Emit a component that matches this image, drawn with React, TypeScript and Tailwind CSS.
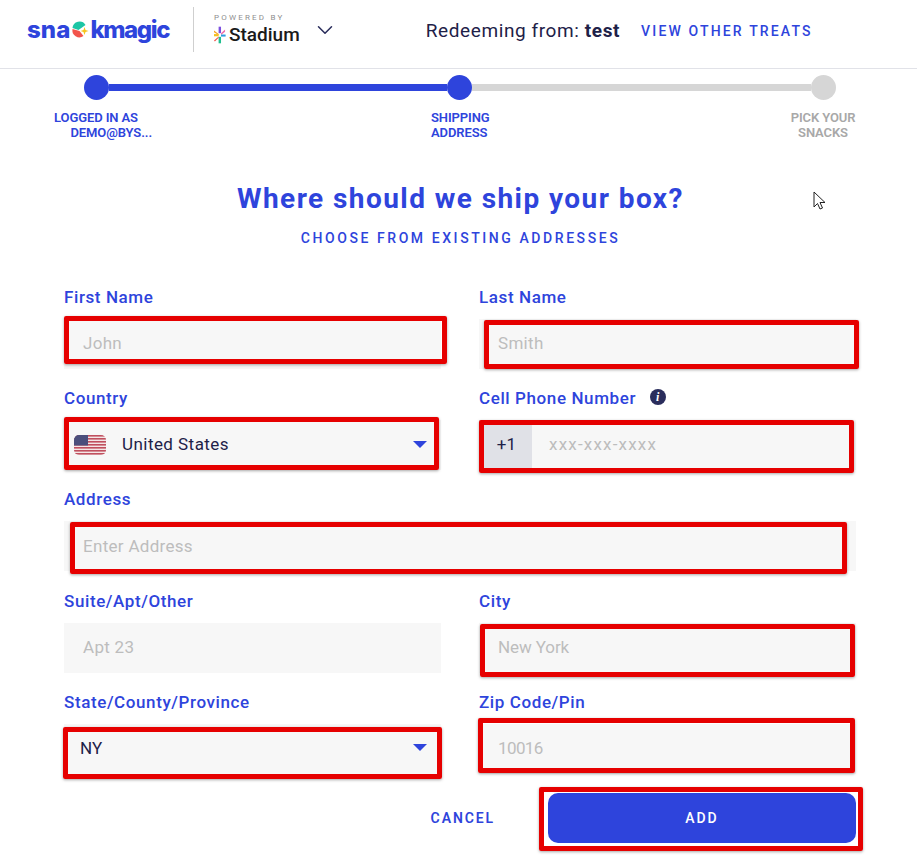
import { ChevronDown } from 'lucide-react';

const overlays = [
  'left-[64px] top-[316px] w-[383px] h-[48px]',
  'left-[484px] top-[320px] w-[375px] h-[49px]',
  'left-[64px] top-[417px] w-[375px] h-[53px]',
  'left-[479px] top-[420px] w-[375px] h-[53px]',
  'left-[70px] top-[522px] w-[777px] h-[52px]',
  'left-[480px] top-[624px] w-[375px] h-[53px]',
  'left-[63px] top-[727px] w-[379px] h-[52px]',
  'left-[478px] top-[718px] w-[377px] h-[55px]',
  'left-[539px] top-[787px] w-[324px] h-[64px]',
];

function Label({ children }: { children: React.ReactNode }) {
  return <label className="block h-[18px] leading-[18px] text-[17px] font-medium text-[#2e44dc] tracking-[0.6px] mb-[13px]">{children}</label>;
}

function Field({ label, placeholder, spacing = 'tracking-[0.3px]' }: { label: string; placeholder: string; spacing?: string }) {
  return (
    <div>
      <Label>{label}</Label>
      <div className={`h-[50px] bg-[#f7f7f7] flex items-center px-[19px] text-[17px] text-[#bdbdbd] ${spacing}`}>{placeholder}</div>
    </div>
  );
}

function Caret() {
  return <span className="ml-auto -mt-[2px] w-0 h-0 border-x-[7px] border-x-transparent border-t-[7px] border-t-[#2e44dc]" />;
}

function UsFlag() {
  return (
    <svg width="32" height="20" viewBox="0 0 32 20" className="rounded-[5px]">
      <rect width="32" height="20" fill="#f4e6e6" />
      {[0, 3, 6, 9, 12, 15, 18].map((y) => (
        <rect key={y} y={y} width="32" height="1.6" fill="#c0505f" />
      ))}
      <rect width="14" height="10.5" fill="#4b4f7c" />
    </svg>
  );
}

function Logo() {
  return (
    <div className="flex items-center text-[#2e44dc] text-[24px] font-extrabold leading-none font-['Inter',sans-serif]">
      <span className="tracking-[0.1px]">sna</span>
      <svg width="19" height="18" viewBox="0 0 18 18" className="mx-[0.5px]">
        <path d="M1 7 A7 7 0 0 1 14 4 L7 9 Z" fill="#1cc5a5" />
        <path d="M1 8 L8 10 L12 15 A7 7 0 0 1 1 8 Z" fill="#f2544b" />
        <path d="M13 6 L14 9 L17 10 L14 11 L13 14 L12 11 L9 10 L12 9 Z" fill="#f7c51e" />
      </svg>
      <span className="tracking-[-1.4px]">kmagic</span>
    </div>
  );
}

function StadiumMark() {
  return (
    <svg width="12" height="18" viewBox="0 0 13 18">
      <rect x="5" y="0" width="2.6" height="7" fill="#7b4fe0" />
      <rect x="5" y="11" width="2.6" height="7" fill="#1fbf8f" />
      <path d="M0 4 L5 8 L5 9 L0 6 Z" fill="#f7a01e" />
      <rect x="0" y="8" width="5" height="2.4" fill="#f4c01e" />
      <path d="M0 15 L5 10.5 L5 12 L1 16 Z" fill="#f2544b" />
      <path d="M7.6 7 L12 3 L12 5.5 L7.6 9 Z" fill="#f06ba8" />
      <rect x="7.6" y="8.5" width="5" height="2.2" fill="#2e9ce0" />
    </svg>
  );
}

function Step({ lines, color, align }: { lines: string[]; color: string; align: string }) {
  return (
    <div className={`text-[13px] font-semibold leading-[15px] tracking-[-0.1px] ${color} ${align}`}>
      {lines.map((l) => (
        <div key={l}>{l}</div>
      ))}
    </div>
  );
}

export default function App() {
  return (
    <div className="relative w-[917px] h-[860px] bg-white overflow-hidden font-['Roboto',sans-serif] text-[#1e2148]">
      <header className="h-[69px] border-b border-[#e1e2e8] flex items-center">
        <div className="w-[193px] pl-[27px] pb-[9px]"><Logo /></div>
        <div className="w-px h-[45px] bg-[#cfcfcf] -mt-[9px]" />
        <div className="ml-[20px] -mt-[8px]">
          <div className="text-[8px] leading-[10px] tracking-[2.2px] text-[#8f8f8f]">POWERED BY</div>
          <div className="flex items-center gap-[3px] text-[#1a1a1a] text-[19px] leading-[24px] font-medium"><StadiumMark />Stadium</div>
        </div>
        <ChevronDown size={26} strokeWidth={1.4} className="ml-[12px] -mt-[8px] text-[#2a2d5c]" />
        <div className="ml-[88px] -mt-[5px] text-[19px] tracking-[0.6px] whitespace-nowrap">Redeeming from: <span className="font-bold">test</span></div>
        <a className="ml-[21px] -mt-[5px] text-[14px] font-medium tracking-[2.15px] text-[#2e44dc] whitespace-nowrap">VIEW OTHER TREATS</a>
      </header>

      <div className="relative h-[90px]">
        <div className="ml-[84px] w-[752px] pt-[6px] flex items-center h-[30px]">
          <div className="w-[25px] h-[25px] rounded-full bg-[#2e44dc] shrink-0" />
          <div className="w-[339px] h-[7px] bg-[#2e44dc]" />
          <div className="w-[25px] h-[25px] rounded-full bg-[#2e44dc] shrink-0" />
          <div className="w-[340px] h-[7px] bg-[#d6d6d6]" />
          <div className="w-[25px] h-[25px] rounded-full bg-[#d6d6d6] shrink-0" />
        </div>
        <div className="flex mt-[11px]">
          <div className="ml-[54px] w-[98px]"><Step lines={['LOGGED IN AS']} color="text-[#2e44dc]" align="text-left" /><Step lines={['DEMO@BYS...']} color="text-[#2e44dc]" align="text-right" /></div>
          <div className="ml-[279px] w-[59px]"><Step lines={['SHIPPING', 'ADDRESS']} color="text-[#2e44dc]" align="text-left" /></div>
          <div className="ml-[300px] w-[66px]"><Step lines={['PICK YOUR', 'SNACKS']} color="text-[#a8a8a8]" align="text-center" /></div>
        </div>
      </div>

      <h1 className="mt-[22px] pl-[4px] text-center text-[28px] leading-[36px] font-bold tracking-[1.43px] text-[#2e44dc]">Where should we ship your box?</h1>
      <a className="block mt-[12px] pl-[4px] text-center text-[14px] leading-[18px] font-medium tracking-[2.57px] text-[#2e44dc]">CHOOSE FROM EXISTING ADDRESSES</a>

      <form className="ml-[64px] mr-[61px] mt-[40.75px] grid grid-cols-2 gap-x-[38px] gap-y-[20.25px]">
        <Field label="First Name" placeholder="John" />
        <Field label="Last Name" placeholder="Smith" />
        <div>
          <Label>Country</Label>
          <div className="h-[50px] bg-[#f7f7f7] flex items-center pl-[10px] pr-[14px] text-[17px] tracking-[0.45px]">
            <UsFlag />
            <span className="ml-[16px]">United States</span>
            <Caret />
          </div>
        </div>
        <div>
          <Label>
            <span className="inline-flex items-center gap-[14px]">Cell Phone Number
              <span className="w-[16px] h-[16px] rounded-full bg-[#2a2d5c] text-white text-[12px] leading-[16px] font-bold italic text-center font-['Liberation_Serif',serif] -mt-[3px]">i</span>
            </span>
          </Label>
          <div className="h-[50px] bg-[#f7f7f7] flex items-center text-[17px] tracking-[0.2px]">
            <div className="w-[53px] h-full bg-[#e0e1e7] flex items-center justify-center pl-[2px]">+1</div>
            <span className="ml-[17px] text-[#bdbdbd] tracking-[1.2px]">xxx-xxx-xxxx</span>
          </div>
        </div>
        <div className="col-span-2"><Field label="Address" placeholder="Enter Address" /></div>
        <Field label="Suite/Apt/Other" placeholder="Apt 23" />
        <Field label="City" placeholder="New York" spacing="tracking-[-0.1px]" />
        <div>
          <Label>State/County/Province</Label>
          <div className="h-[50px] bg-[#f7f7f7] flex items-center pl-[16px] pr-[14px] text-[17px] tracking-[0.2px]">NY<Caret /></div>
        </div>
        <Field label="Zip Code/Pin" placeholder="10016" spacing="tracking-[-0.6px]" />
      </form>

      <div className="mt-[19.25px] mr-[61px] flex items-center justify-end">
        <button type="button" className="text-[14px] font-semibold tracking-[1.9px] text-[#2e44dc] mr-[53px]">CANCEL</button>
        <button type="button" className="w-[308px] h-[50px] rounded-[10px] bg-[#2e44dc] text-white text-[14px] font-medium tracking-[1.9px]">ADD</button>
      </div>

      {overlays.map((o) => (
        <div key={o} className={`absolute ${o} border-[5px] border-[#e60000] rounded-[2px] shadow-[0_1px_3px_rgba(0,0,0,0.35)] pointer-events-none`} />
      ))}

      <svg className="absolute left-[813px] top-[191px]" width="13" height="20" viewBox="0 0 13 20">
        <path d="M1 1 L1 16 L4.5 12.5 L7 18 L9.5 17 L7 11.5 L12 11.5 Z" fill="white" stroke="#222" strokeWidth="1" />
      </svg>
    </div>
  );
}
